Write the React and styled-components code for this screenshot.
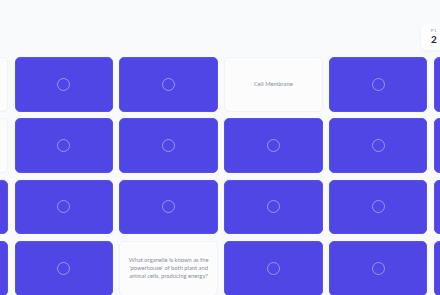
import React from "react";
import styled, { createGlobalStyle } from "styled-components";

const GlobalStyle = createGlobalStyle`
  html, body { margin: 0; padding: 0; }
  body {
    background: #f8fafc;
    font-family: Lato, "Open Sans", "Liberation Sans", sans-serif;
    overflow: hidden;
  }
`;

// board layout: null = face-down card, "" = revealed but empty, text = revealed
const ROWS = [
  ["", null, null, "Cell Membrane", null, null],
  ["", null, null, null, null, null],
  [null, null, null, null, null, null],
  [null, null, "What organelle is known as the 'powerhouse' of both plant and animal cells, producing energy?", null, null, null],
];

const App = () => {
  return (
    <>
      <GlobalStyle />
      <Page>
        <Header>
          <Score>
            <Player>P1</Player>
            <Points>2</Points>
          </Score>
        </Header>
        <BoardWrap>
          <Board>
            {ROWS.flat().map((card, i) =>
              card === null ? (
                <Card key={i}>
                  <Ring />
                </Card>
              ) : (
                <Card key={i} open>
                  <CardText>{card}</CardText>
                </Card>
              )
            )}
          </Board>
        </BoardWrap>
      </Page>
    </>
  );
};

export default App;

const Page = styled.div`
  width: 440px;
  height: 295px;
  overflow: hidden;
`;

const Header = styled.div`
  display: flex;
  justify-content: flex-end;
  padding-top: 24px;
  height: 26px;
`;

const Score = styled.div`
  display: flex;
  flex-direction: column;
  align-items: center;
  width: 26px;
  height: 26px;
  margin-right: -7px;
  box-sizing: border-box;
  padding-top: 4px;
  background: #ffffff;
  border-radius: 6px;
  box-shadow: 0 1px 3px rgba(15, 23, 42, 0.06);
`;

const Player = styled.span`
  font-size: 4.5px;
  line-height: 5px;
  letter-spacing: 0.5px;
  color: #9ca3af;
  font-weight: 600;
`;

const Points = styled.span`
  margin-top: 1px;
  font-size: 10px;
  line-height: 11px;
  font-weight: 700;
  color: #1e293b;
`;

const BoardWrap = styled.div`
  display: flex;
  justify-content: center;
  padding-top: 7px;
  margin-left: 2px;
`;

const Board = styled.div`
  flex: none;
  display: grid;
  grid-template-columns: repeat(6, 98.3px);
  grid-auto-rows: 54.8px;
  gap: 6.5px;
`;

const Card = styled.div`
  display: flex;
  align-items: center;
  justify-content: center;
  box-sizing: border-box;
  border-radius: 5px;
  background: ${(p) => (p.open ? "#fcfcfd" : "#4f46e5")};
  border: 1px solid ${(p) => (p.open ? "#f0f2f6" : "#5a52e8")};
  padding: 0 7px;
`;

const Ring = styled.div`
  width: 13px;
  height: 13px;
  box-sizing: border-box;
  border-radius: 50%;
  border: 1.3px solid rgba(255, 255, 255, 0.4);
`;

const CardText = styled.p`
  margin: 0;
  text-align: center;
  font-size: 5.8px;
  line-height: 8px;
  color: #8b8f98;
`;
